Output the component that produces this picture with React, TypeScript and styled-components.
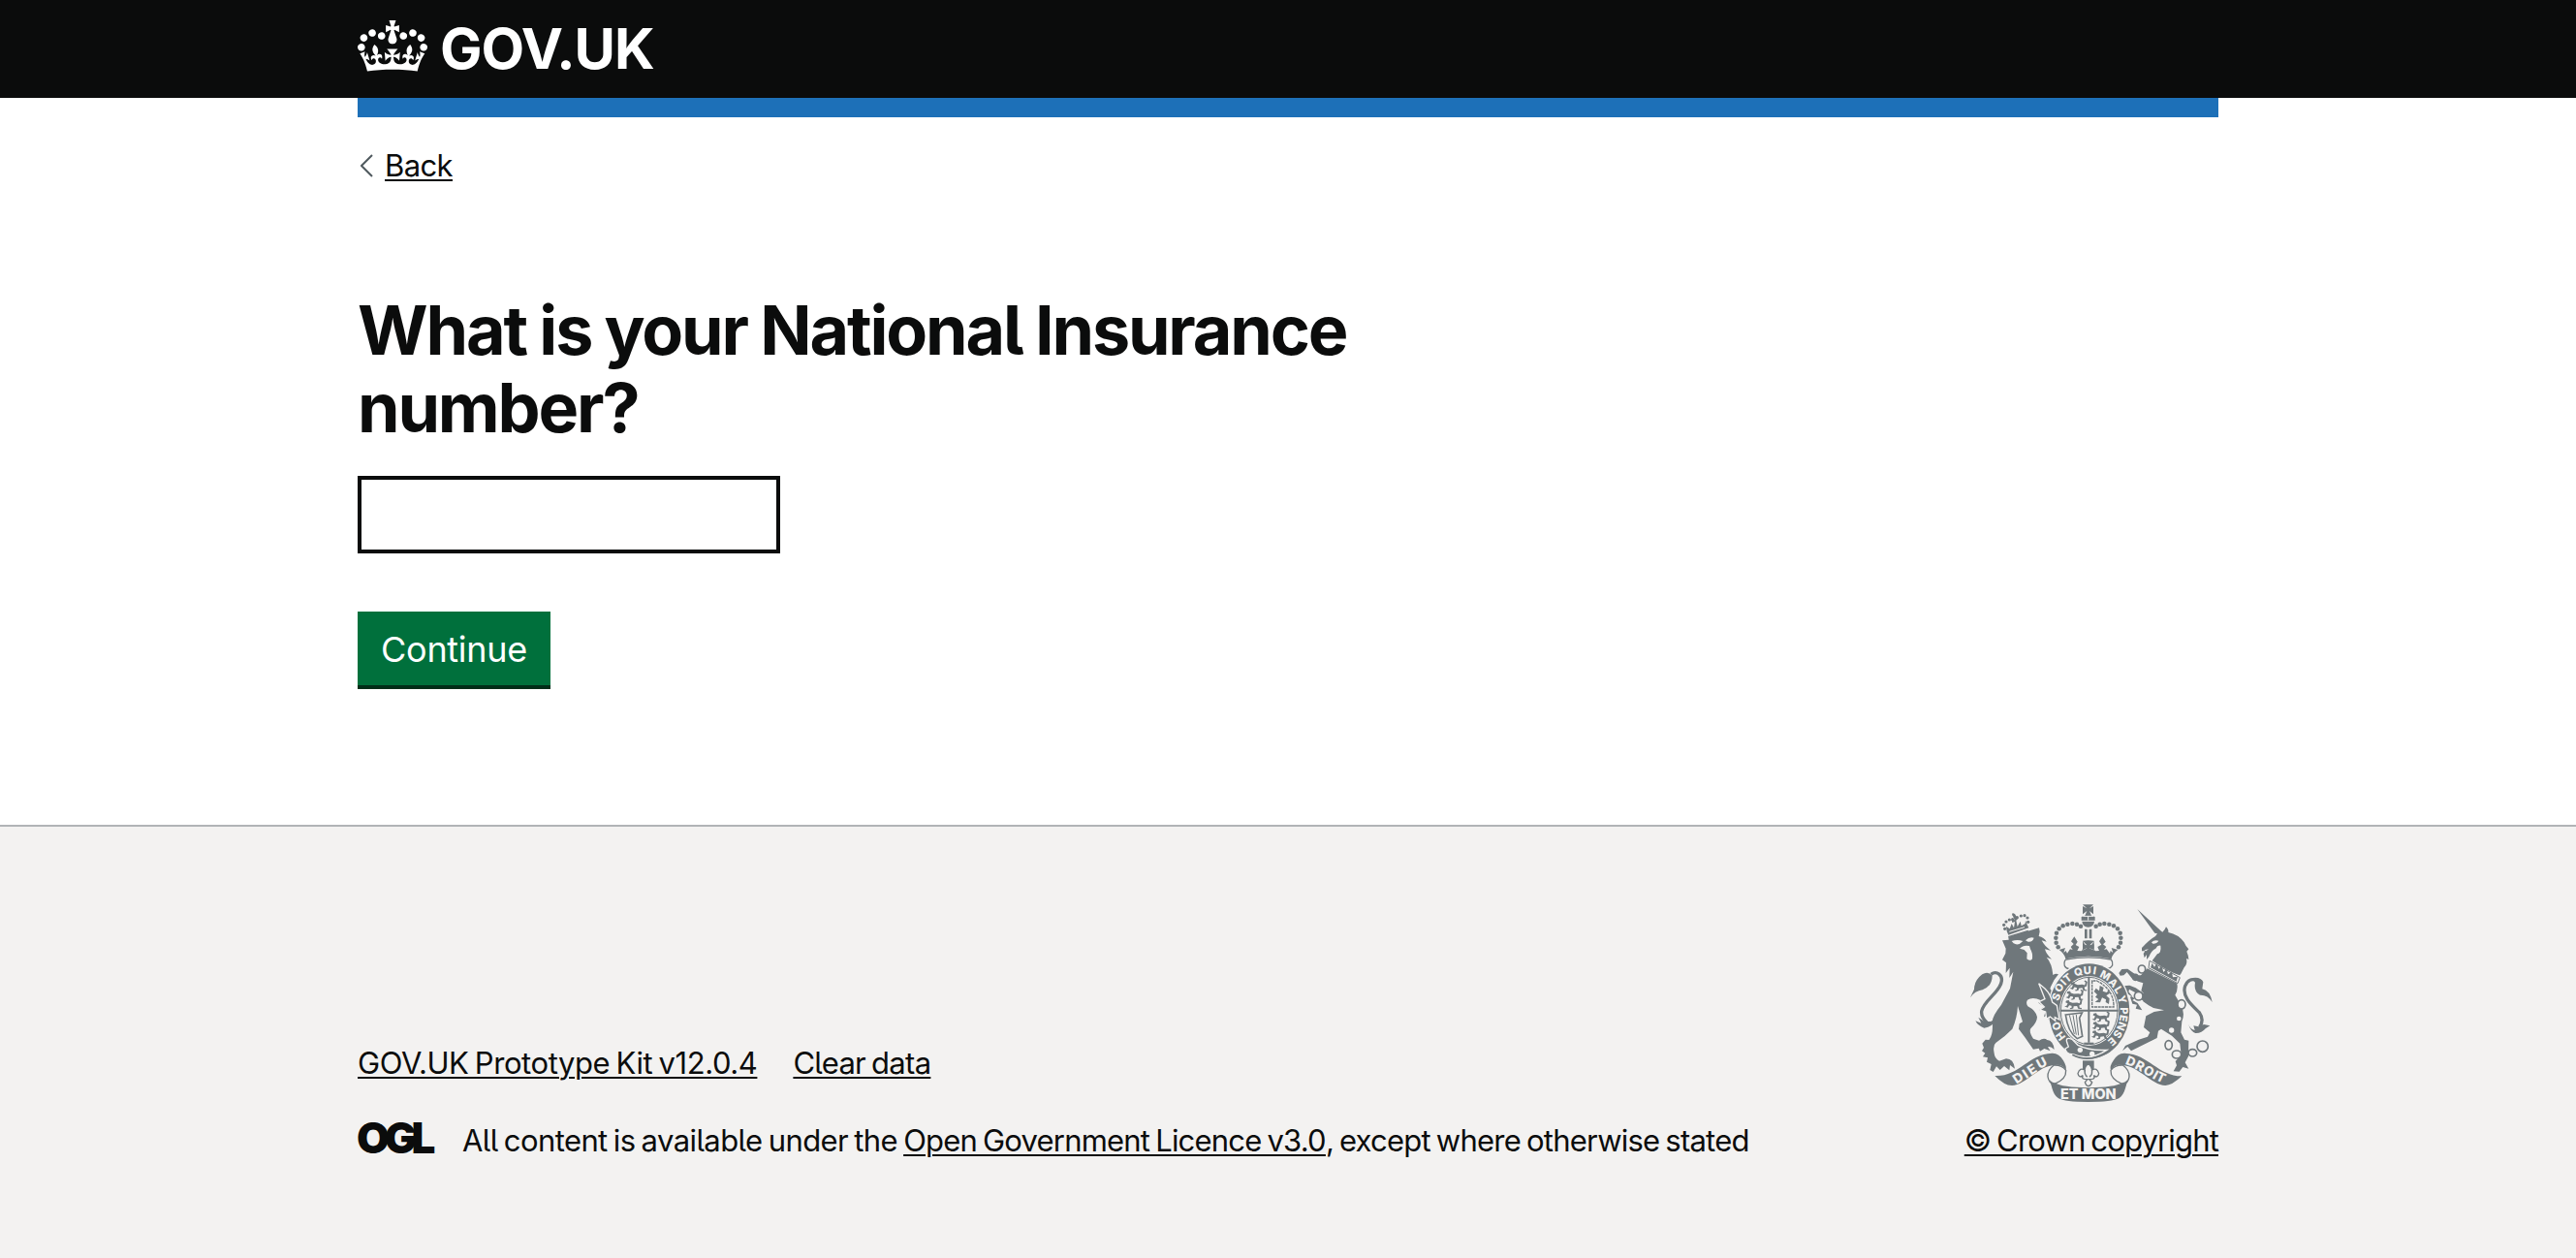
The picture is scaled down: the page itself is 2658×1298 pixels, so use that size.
import React from "react";
import styled, { createGlobalStyle } from "styled-components";

const ink = "#0b0c0c";
const crest = "#6f777b";
const paper = "#f3f2f1";

const GlobalStyle = createGlobalStyle`
  *, *::before, *::after { box-sizing: border-box; }
  body {
    margin: 0;
    background: #ffffff;
    color: ${ink};
    font-family: Inter, "Liberation Sans", sans-serif;
    font-feature-settings: "cv05" 1;
    font-size: 31px;
    line-height: 40px;
  }
`;

const Page = styled.div`
  display: flex;
  flex-direction: column;
  min-height: 1298px;
`;

const Container = styled.div`
  width: 1920px;
  margin: 0 auto;
`;

const Header = styled.header`
  background: ${ink};
  color: #ffffff;
`;

const HeaderInner = styled(Container)`
  display: flex;
  align-items: center;
  gap: 13px;
  height: 101px;
`;

const CrownSvg = styled.svg`
  display: block;
  width: 72px;
  height: 53px;
  margin-bottom: 6px;
  fill: currentColor;
`;

const LogoText = styled.span`
  font-size: 58px;
  font-weight: 700;
  line-height: 101px;
  letter-spacing: -1.1px;
`;

const PhaseBar = styled(Container)`
  height: 20px;
  background: #1d70b8;
`;

const Main = styled(Container).attrs({ as: "main" })`
  display: flex;
  flex-direction: column;
  align-items: flex-start;
  padding: 30px 0 140px;
`;

const Link = styled.a<{ $spacing?: number }>`
  color: ${ink};
  letter-spacing: ${(p) => p.$spacing ?? 0}px;
  word-spacing: -2px;
  text-decoration: underline;
  text-decoration-thickness: 2px;
  text-underline-offset: 3px;
`;

const BackRow = styled.div`
  display: flex;
  align-items: center;
  gap: 12px;
  padding-left: 3px;
`;

const Chevron = styled.svg`
  width: 13px;
  height: 24px;
  fill: none;
  stroke: #505a5f;
  stroke-width: 2;
`;

const Heading = styled.h1`
  width: 1260px;
  margin: 110px 0 30px;
  font-size: 70px;
  font-weight: 700;
  line-height: 80px;
  letter-spacing: -2.15px;
  word-spacing: -1px;
`;

const Input = styled.input`
  width: 436px;
  height: 80px;
  padding: 10px;
  border: 4px solid ${ink};
  border-radius: 0;
  background: #ffffff;
  font: inherit;
`;

const Button = styled.button`
  width: 199px;
  height: 76px;
  margin: 60px 0 4px;
  padding: 2px 0 0;
  border: 0;
  border-radius: 0;
  background: #00703c;
  box-shadow: 0 4px 0 #002d18;
  color: #ffffff;
  font: inherit;
  font-size: 36px;
  letter-spacing: -0.3px;
`;

const Footer = styled.footer`
  flex: 1;
  padding-top: 80px;
  border-top: 2px solid #b1b4b6;
  background: ${paper};
`;

const FooterRow = styled(Container)`
  display: flex;
  align-items: flex-end;
  justify-content: space-between;
`;

const Meta = styled.div`
  display: flex;
  flex-direction: column;
  gap: 40px;
`;

const LinkList = styled.div`
  display: flex;
  gap: 37px;
`;

const Licence = styled.div`
  display: flex;
  align-items: flex-start;
  gap: 26px;
  white-space: nowrap;
`;

const OglMark = styled.span`
  width: 83px;
  margin-left: -1px;
  font-size: 44px;
  font-weight: 900;
  line-height: 35px;
  letter-spacing: -5.4px;
`;

const Run = styled.span<{ $spacing: number }>`
  letter-spacing: ${(p) => p.$spacing}px;
  word-spacing: -2px;
`;

const Copyright = styled.div`
  display: flex;
  flex-direction: column;
  align-items: flex-end;
  gap: 20px;
  white-space: nowrap;
`;

const ArmsSvg = styled.svg`
  display: block;
  width: 250px;
  height: 204px;
  margin-right: 6px;
  font-weight: 800;
`;

function Crown() {
  return (
    <CrownSvg viewBox="0 0 132 97" preserveAspectRatio="none" aria-hidden="true">
      <path
        fillRule="evenodd"
        d="M25 30.2c3.5 1.5 7.7-.2 9.1-3.7 1.5-3.6-.2-7.8-3.9-9.2-3.6-1.4-7.6.3-9.1 3.9-1.4 3.5.3 7.5 3.9 9zM9 39.5c3.6 1.5 7.8-.2 9.2-3.7 1.5-3.6-.2-7.8-3.9-9.1-3.6-1.5-7.6.2-9.1 3.8-1.4 3.5.3 7.5 3.8 9zM4.4 57.2c3.5 1.5 7.7-.2 9.1-3.8 1.5-3.6-.2-7.7-3.9-9.1-3.5-1.5-7.6.3-9.1 3.8-1.4 3.5.3 7.6 3.9 9.1zm38.3-21.4c3.5 1.5 7.7-.2 9.1-3.8 1.5-3.6-.2-7.7-3.9-9.1-3.6-1.5-7.6.3-9.1 3.8-1.3 3.6.4 7.7 3.9 9.1zm64.4-5.6c-3.6 1.5-7.8-.2-9.1-3.7-1.5-3.6.2-7.8 3.8-9.2 3.6-1.4 7.7.3 9.2 3.9 1.3 3.5-.4 7.5-3.9 9zm15.9 9.3c-3.6 1.5-7.7-.2-9.1-3.7-1.5-3.6.2-7.8 3.7-9.1 3.6-1.5 7.7.2 9.2 3.8 1.5 3.5-.3 7.5-3.8 9zm4.7 17.7c-3.6 1.5-7.8-.2-9.2-3.8-1.5-3.6.2-7.7 3.9-9.1 3.6-1.5 7.7.3 9.2 3.8 1.3 3.5-.4 7.6-3.9 9.1zM89.3 35.8c-3.6 1.5-7.8-.2-9.2-3.8-1.4-3.6.2-7.7 3.9-9.1 3.6-1.5 7.7.3 9.2 3.8 1.4 3.6-.3 7.7-3.9 9.1zM69.7 17.7l8.9 4.7V9.3l-8.9 2.8c-.2-.3-.5-.6-.9-.9L72.4 0H59.6l3.5 11.2c-.3.3-.6.5-.9.9l-8.8-2.8v13.1l8.8-4.7c.3.3.6.7.9.9l-5 15.4v.1c-.2.8-.4 1.6-.4 2.4 0 4.1 3.1 7.5 7 8.1h.2c.3 0 .7.1 1 .1.4 0 .7 0 1-.1h.2c4-.6 7.1-4.1 7.1-8.1 0-.8-.1-1.7-.4-2.4V34l-5.1-15.4c.4-.2.7-.6 1-.9zM66 92.8c16.9 0 32.8 1.1 47.1 3.2 4-16.9 8.9-26.7 14-33.5l-9.6-3.4c1 4.9 1.1 7.2 0 10.2-1.5-1.4-3-4.3-4.2-8.7L108.6 76c2.8-2 5-3.2 7.5-3.3-4.4 9.4-10 11.9-13.6 11.2-4.3-.8-6.3-4.6-5.6-7.9 1-4.7 5.7-5.9 8-.5 4.3-8.7-3-11.4-7.6-8.8 7.1-7.2 7.9-13.5 2.1-21.1-8 6.1-8.1 12.3-4.5 20.8-4.7-5.4-12.1-2.5-9.5 6.2 3.4-5.2 7.9-2 7.2 3.1-.6 4.3-6.4 7.8-13.5 7.2-10.3-.9-10.9-8-11.2-13.8 2.5-.5 7.1 1.8 11 7.3L80.2 60c-4.1 4.4-8 5.3-12.3 5.4 1.4-4.4 8-11.6 8-11.6H55.5s6.4 7.2 7.9 11.6c-4.2-.1-8-1-12.3-5.4l1.4 16.4c3.9-5.5 8.5-7.7 10.9-7.3-.3 5.8-.9 12.8-11.1 13.8-7.2.6-12.9-2.9-13.5-7.2-.7-5 3.8-8.3 7.1-3.1 2.7-8.7-4.6-11.6-9.4-6.2 3.7-8.5 3.6-14.7-4.6-20.8-5.8 7.6-5 13.9 2.2 21.1-4.7-2.6-11.9.1-7.7 8.8 2.3-5.5 7.1-4.2 8.1.5.7 3.3-1.3 7.1-5.7 7.9-3.5.7-9-1.8-13.5-11.2 2.5.1 4.7 1.3 7.5 3.3l-4.7-15.4c-1.2 4.4-2.7 7.2-4.3 8.7-1.1-3-.9-5.3 0-10.2l-9.5 3.4c5 6.9 9.9 16.7 14 33.5 14.8-2.1 30.8-3.2 47.7-3.2z"
      />
    </CrownSvg>
  );
}

type Glyph = [string, number, number, number?];

const garterLetters: Glyph[] = [
  ["H", 348, 447], ["O", 336, 416],
  ["S", 335, 325], ["O", 344, 297], ["I", 357, 280], ["T", 370, 267],
  ["Q", 403, 248], ["U", 431, 243], ["I", 454, 244],
  ["M", 487, 259], ["A", 512, 282], ["L", 528, 304], ["Y", 539, 334],
  ["P", 545, 369], ["E", 543, 392], ["N", 537, 417], ["S", 526, 441], ["E", 508, 464],
];

const dieu: Glyph[] = [["D", 217, 576, -33], ["I", 239, 564, -33], ["E", 260, 550, -33], ["U", 290, 530, -28]];
const droit: Glyph[] = [["D", 566, 525, 22], ["R", 594, 539, 27], ["O", 622, 555, 29], ["I", 643, 567, 30], ["T", 660, 574, 26]];

const crownBeads = [
  [341, 172], [335, 158], [334, 143], [336, 128], [344, 115], [356, 106], [370, 101], [385, 99], [399, 101], [411, 107],
];
const smallBeads = [[176, 115], [173, 103], [180, 93], [190, 87], [200, 86], [214, 80], [226, 75], [237, 74], [246, 81], [248, 94]];

function Letter({ g, size }: { g: Glyph; size: number }) {
  const [ch, x, y, r] = g;
  const angle = r ?? (Math.atan2(x - 437, (370 - y) * 0.86) * 180) / Math.PI;
  return (
    <text transform={`translate(${x} ${y}) rotate(${angle})`} y={size * 0.36} fontSize={size} textAnchor="middle" fill={paper}>
      {ch}
    </text>
  );
}

function Passant({ x, y }: { x: number; y: number }) {
  return (
    <path
      transform={`translate(${x} ${y}) scale(1.15 1.05)`}
      d="M2 20l6-2 3-7-6-3 2-5 7-1 2 5 8 3 12-1 7 2 2-8-4-4 3-2 6 4-2 13-6 3 1 7 6 1-1 3-9-1-3-8-9 1-1 6-7 2-3-2 6-3-1-5-6-1-4 7z"
    />
  );
}

function RoyalArms() {
  return (
    <ArmsSvg viewBox="69 39 750 612" preserveAspectRatio="none" aria-hidden="true">
      <g fill={crest} stroke="none">
        {/* lion supporter */}
        <path d="M187 140L282 112L284 124L281 138Q297 141 305 155L290 151Q298 168 318 182L300 178Q304 194 321 209L305 203Q322 222 325 258Q334 252 342 256Q325 274 316 300Q334 325 340 352L343 392L332 384L330 398L319 386L309 396L309 381L297 388L302 370L282 367L297 356L280 344L287 336Q262 324 246 335Q240 345 247 355Q272 368 276 388Q276 405 256 424Q250 434 264 455L282 461Q297 451 307 459Q326 460 329 489Q318 478 309 481L317 493L298 486L285 494L281 485L264 488L238 451L219 425L221 409L231 403L216 354Q214 392 199 425Q178 447 148 468Q138 476 143 500Q144 516 159 524L180 517Q203 517 207 548L192 537L190 553L174 540L161 552L150 541L140 558L130 552L134 534L120 527L123 514L108 511L115 500L105 493L111 483L106 470L116 458L127 459Q141 442 137 402Q138 384 165 350L192 300L202 248L190 267L191 236L179 252L180 220L168 211L178 191L179 176L168 151L188 149Z" />
        <path d="M197 153Q215 147 232 153Q218 169 203 160ZM240 151Q252 139 266 143Q262 157 248 155Z" fill={paper} />
        <path d="M222 176Q233 164 252 168L255 178Q263 190 261 208Q255 217 244 208L245 190L236 180Z" fill={paper} />
        <path d="M133 256C151 243 171 259 165 281C159 312 111 337 104 370Q102 388 120 405" fill="none" stroke={crest} strokeWidth="10" />
        <path d="M137 260Q124 245 106 256Q81 275 81 302L69 328Q83 307 107 304Q137 292 137 260ZM85 400L103 407L94 389L112 401L132 402L151 393Q137 420 112 422Q92 415 85 400Z" />
        {/* lion's crown */}
        {smallBeads.map(([x, y]) => <circle key={`${x}-${y}`} cx={x} cy={y} r="4.8" />)}
        <path d="M182 122L180 107L191 115L197 99L204 112L207 93L199 96L197 86L206 88L201 76L198 72L200 66L207 69L212 77L216 84L211 89L215 108L224 92L227 106L239 99L240 89L246 104L250 112L187 134ZM186 138L248 119L249 124L188 142Z" fillRule="evenodd" />
        <path d="M190 124L237 110" stroke={paper} strokeWidth="3" />

        {/* unicorn supporter */}
        <path d="M586 54L660 122L664 125Q672 118 675 109Q684 119 682 126Q713 132 731 157Q736 170 745 178L739 185Q744 196 745 210L738 207Q742 225 731 235L721 254L717 259Q681 248 632 214L648 193Q661 189 658 167Q649 164 643 176Q629 182 622 202L615 210L615 195L608 205L605 192L610 184L600 184L600 174Q624 148 642 138L648 130L640 128Z" />
        <path d="M630 157Q638 148 652 152Q646 162 634 161ZM607 181L621 178L613 184Z" fill={paper} />
        <path d="M624 214L718 266L711 284L621 236Z" fill={paper} stroke={crest} strokeWidth="3" />
        <path d="M627 235L632 221L639 233L646 221L653 239L661 229L667 249L677 239L681 256L693 248L696 265L711 263L707 278Z" />
        <path d="M617 238L709 284Q713 304 703 320L718 346Q736 374 724 402L721 436L732 458L745 461L744 510L734 529L745 548L727 543L716 557L698 556L708 538L704 525L722 506L718 470L693 446L660 425L651 431L647 453L567 493L556 480L540 493L549 477L590 458L618 449L625 436L606 420L613 385L638 372L669 367L636 360L621 352L604 340L606 315L598 307L604 283L589 278L570 269L554 249L544 259L533 260L529 252L538 240L556 239L584 259L597 259Z" />
        <path d="M606 339L593 330L578 311L561 302L559 310L570 323L564 326L571 347L585 350L581 362L601 367L587 345L571 336L578 331L559 318L542 303L543 292L562 290L581 298L606 315Z" />
        <path d="M779 419Q794 397 778 374C755 352 723 325 734 292Q746 263 772 276" fill="none" stroke={crest} strokeWidth="10" />
        <path d="M757 267Q783 263 790 280L787 301Q811 306 818 342Q804 319 780 320Q760 309 765 282ZM744 410Q750 426 764 429L760 415L776 418L792 411L811 415L797 424Q785 439 766 438Q751 432 744 410Z" />
        {[[715, 393, 7], [692, 429, 8]].map(([x, y, r]) => <circle key={x} cx={x} cy={y} r={r} fill={paper} />)}
        <g fill="none" stroke={crest} strokeWidth="5">
          <ellipse cx="600" cy="240" rx="11" ry="12" />
          <ellipse cx="580" cy="265" rx="8" ry="9" />
          <ellipse cx="590" cy="323" rx="13" ry="13" fill={paper} />
          <ellipse cx="723" cy="349" rx="12" ry="14" fill={paper} />
          <ellipse cx="683" cy="475" rx="11" ry="14" />
          <ellipse cx="708" cy="504" rx="14" ry="12" />
          <ellipse cx="757" cy="499" rx="13" ry="11" />
          <circle cx="788" cy="479" r="17" />
        </g>

        {/* imperial crown */}
        <path d="M417 40H450L438 52L450 45V70L438 60L444 74L455 78V89H413V78L424 74L430 60L417 70V45L430 52ZM415 92H453Q452 108 434 110Q416 108 415 92ZM423 116H431V145H423ZM437 116H445V145H437Z" />
        <path d="M418 76H450M434 76V89" stroke={paper} strokeWidth="3" />
        {crownBeads.map(([x, y]) => (
          <g key={`${x}-${y}`}>
            <circle cx={x} cy={y} r="6.8" />
            <circle cx={869 - x} cy={y} r="6.8" />
          </g>
        ))}
        <path d="M344 180L363 174L358 189L365 183L369 191L378 178L386 180L380 171L389 162L381 154L391 139L401 155L395 165L406 171L400 183L413 184L425 166L417 177L417 153L434 151L452 153V177L443 166L456 184L468 183L463 171L475 164L468 154L478 139L488 155L480 163L490 171L483 180L491 178L501 191L503 183L511 189L506 174L526 180Q508 193 506 208Q434 193 364 208Q360 191 344 180Z" />
        <path d="M417 152L434 165L452 152L443 168L455 182L434 174L415 182L426 168Z" fill={paper} />
        <path d="M417 152H452L439 166L452 163V181L438 175L444 190H424L430 175L417 181V163L430 166Z" />
        <path d="M365 210Q434 197 505 210Q511 217 509 228Q501 241 490 239Q434 216 379 239Q367 241 361 230Q358 216 365 210Z" fill={paper} stroke={crest} strokeWidth="4" />

        {/* garter */}
        <ellipse cx="437" cy="370" rx="129" ry="151" fill={paper} />
        <ellipse cx="437" cy="370" rx="125" ry="147" />
        <ellipse cx="437" cy="369" rx="92" ry="108" fill={paper} />
        <ellipse cx="437" cy="369" rx="88" ry="104" fill="none" stroke={crest} strokeWidth="3" />
        {garterLetters.map((g, i) => <Letter key={i} g={g} size={33} />)}
        <path d="M436 263V467M347 368H527" stroke={crest} strokeWidth="6" />
        <path d="M421 467H451V472H421Z" />
        <Passant x={374} y={278} />
        <Passant x={362} y={306} />
        <Passant x={358} y={334} />
        <Passant x={443} y={374} />
        <Passant x={443} y={401} />
        <Passant x={441} y={428} />
        <path d="M446 276V357H513Q514 304 461 276Z" fill="none" stroke={crest} strokeWidth="4" strokeDasharray="9 2" />
        <path d="M455 342L466 333L456 326L462 319L452 309L458 299L468 307L470 291L482 297L479 308L491 312L499 304L501 314L490 322L500 331L498 348L488 342L489 334L477 328L471 343Z" />
        <path d="M364 381L415 375L407 391L416 448L400 455Q371 435 364 381Z" fill="none" stroke={crest} strokeWidth="5" />
        <path d="M376 382L391 441M387 382L397 443M397 381L404 445" stroke={crest} strokeWidth="3" />
        <path d="M368 466Q363 448 384 457L402 475Q438 493 492 490Q438 526 386 503Q366 504 363 486L373 480Z" stroke={paper} strokeWidth="4" />
        <path d="M385 505Q437 534 503 492" fill="none" stroke={crest} strokeWidth="5" />
        <circle cx="409" cy="490" r="8" fill={paper} />
        <circle cx="446" cy="502" r="8" fill={paper} />
        {/* paw resting on the garter */}
        <path d="M281 284L300 300Q318 318 323 342L337 352L345 396L331 389L332 400L316 387L305 394L302 372L284 366L298 357L282 341L300 332Z" stroke={paper} strokeWidth="4" />

        {/* motto ribbon */}
        <path d="M145 570C220 573 248 503 322 500Q344 499 357 523Q368 541 365 553Q355 532 329 537C278 540 242 598 198 600Q174 600 145 570Z" />
        <path d="M724 571C650 571 622 503 547 500Q525 499 512 523Q499 541 504 553Q514 532 540 537C591 540 629 598 673 600Q693 600 724 571Z" />
        <path d="M328 537Q308 552 309 573Q313 596 330 595Q367 580 365 553Q353 536 328 537ZM541 537Q562 552 561 573Q558 596 539 595Q502 580 504 553Q516 536 541 537Z" fill={paper} stroke={crest} strokeWidth="4" />
        <path d="M310 573Q317 591 330 592Q354 606 435 607Q515 606 540 592Q556 588 561 572C550 593 551 625 529 640Q508 651 434 651Q361 651 342 640C321 626 322 595 310 573Z" />
        {dieu.map((g, i) => <Letter key={i} g={g} size={41} />)}
        {droit.map((g, i) => <Letter key={i} g={g} size={40} />)}
        <text x="348" y="643" fontSize="45" textLength="173" lengthAdjust="spacingAndGlyphs" fill={paper}>ET MON</text>

        {/* fleur-de-lis */}
        <path d="M417 523H452V560H417Z" />
        <path d="M434 531Q412 554 431 574Q422 566 424 553Q408 542 402 563Q405 578 418 569Q410 581 432 581L424 590Q427 601 434 602Q442 601 446 590L437 581Q459 581 451 569Q464 578 467 563Q461 542 445 553Q448 566 438 574Q457 554 434 531Z" fill={paper} stroke={crest} strokeWidth="4" />
      </g>
    </ArmsSvg>
  );
}

export default function App() {
  return (
    <Page>
      <GlobalStyle />
      <Header>
        <HeaderInner>
          <Crown />
          <LogoText>GOV.UK</LogoText>
        </HeaderInner>
      </Header>
      <PhaseBar />
      <Main>
        <BackRow>
          <Chevron viewBox="0 0 13 24" aria-hidden="true">
            <path d="M12 1L1 12L12 23" />
          </Chevron>
          <Link $spacing={-0.6}>Back</Link>
        </BackRow>
        <Heading>What is your National Insurance number?</Heading>
        <Input aria-label="National Insurance number" />
        <Button>Continue</Button>
      </Main>
      <Footer>
        <FooterRow>
          <Meta>
            <LinkList>
              <Link $spacing={-0.42}>GOV.UK Prototype Kit v12.0.4</Link>
              <Link $spacing={-0.7}>Clear data</Link>
            </LinkList>
            <Licence>
              <OglMark>OGL</OglMark>
              <span>
                <Run $spacing={-0.59}>All content is available under the </Run>
                <Link $spacing={-0.79}>Open Government Licence v3.0</Link>
                <Run $spacing={-0.77}>, except where otherwise stated</Run>
              </span>
            </Licence>
          </Meta>
          <Copyright>
            <RoyalArms />
            <Link $spacing={-0.84}>© Crown copyright</Link>
          </Copyright>
        </FooterRow>
      </Footer>
    </Page>
  );
}
